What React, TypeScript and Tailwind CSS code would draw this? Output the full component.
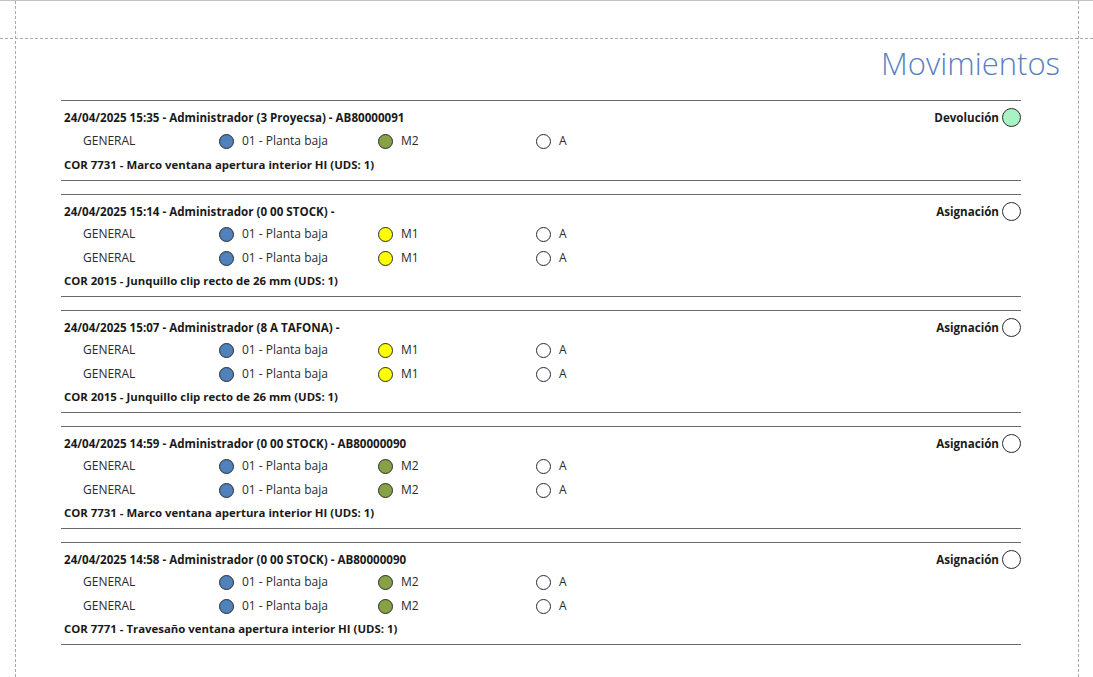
import React from 'react';

type Line = { zona: string; planta: string; modulo: string; moduloColor: string; pos: string };

type Movimiento = {
  cabecera: string;
  tipo: string;
  tipoColor: string;
  lineas: Line[];
  articulo: string;
};

const planta = (modulo: string, color: string): Line => ({
  zona: 'GENERAL',
  planta: '01 - Planta baja',
  modulo,
  moduloColor: color,
  pos: 'A',
});

const M2 = '#86a244';
const M1 = '#ffff00';

const movimientos: Movimiento[] = [
  {
    cabecera: '24/04/2025 15:35 - Administrador (3 Proyecsa) - AB80000091',
    tipo: 'Devolución',
    tipoColor: '#a8f2c4',
    lineas: [planta('M2', M2)],
    articulo: 'COR 7731 - Marco ventana apertura interior HI (UDS: 1)',
  },
  {
    cabecera: '24/04/2025 15:14 - Administrador (0 00 STOCK) -',
    tipo: 'Asignación',
    tipoColor: '#ffffff',
    lineas: [planta('M1', M1), planta('M1', M1)],
    articulo: 'COR 2015 - Junquillo clip recto de 26 mm (UDS: 1)',
  },
  {
    cabecera: '24/04/2025 15:07 - Administrador (8 A TAFONA) -',
    tipo: 'Asignación',
    tipoColor: '#ffffff',
    lineas: [planta('M1', M1), planta('M1', M1)],
    articulo: 'COR 2015 - Junquillo clip recto de 26 mm (UDS: 1)',
  },
  {
    cabecera: '24/04/2025 14:59 - Administrador (0 00 STOCK) - AB80000090',
    tipo: 'Asignación',
    tipoColor: '#ffffff',
    lineas: [planta('M2', M2), planta('M2', M2)],
    articulo: 'COR 7731 - Marco ventana apertura interior HI (UDS: 1)',
  },
  {
    cabecera: '24/04/2025 14:58 - Administrador (0 00 STOCK) - AB80000090',
    tipo: 'Asignación',
    tipoColor: '#ffffff',
    lineas: [planta('M2', M2), planta('M2', M2)],
    articulo: 'COR 7771 - Travesaño ventana apertura interior HI (UDS: 1)',
  },
];

const Dot = ({ color, size = 'sm' }: { color: string; size?: 'sm' | 'lg' }) => (
  <span
    className={
      size === 'lg'
        ? 'inline-block w-[19px] h-[19px] rounded-full border border-[#2b2b2b] shrink-0'
        : 'inline-block w-[15px] h-[15px] rounded-full border border-[#2b2b2b] shrink-0'
    }
    style={{ backgroundColor: color }}
  />
);

const Registro = ({ m }: { m: Movimiento }) => (
  <div className="border-y border-[#6a6a6a] pt-[6px] pb-[4px] mb-[13px] text-[12px] text-[#1a1a1a]">
    {/* Cabecera */}
    <div className="flex items-center justify-between h-[21px]">
      <span className="pl-[3px] font-bold text-[11.6px]">{m.cabecera}</span>
      <span className="flex items-center gap-[3px] font-bold text-[11.6px]">
        {m.tipo}
        <Dot color={m.tipoColor} size="lg" />
      </span>
    </div>

    {/* Lineas */}
    <div className="min-h-[26px] flex flex-col justify-center">
      {m.lineas.map((l, i) => (
        <div key={i} className="flex items-center h-[24px] pl-[22px] text-[#2a2a2a]">
          <span className="w-[136px]">{l.zona}</span>
          <span className="w-[159px] flex items-center gap-[8px]">
            <Dot color="#4f81bd" />
            {l.planta}
          </span>
          <span className="w-[158px] flex items-center gap-[8px]">
            <Dot color={l.moduloColor} />
            {l.modulo}
          </span>
          <span className="flex items-center gap-[8px]">
            <Dot color="#ffffff" />
            {l.pos}
          </span>
        </div>
      ))}
    </div>

    {/* Articulo */}
    <div className="h-[22px] flex items-center pl-[3px] font-bold text-[11.4px]">{m.articulo}</div>
  </div>
);

export default function App() {
  return (
    <div className="relative w-[1093px] h-[677px] overflow-hidden bg-white border-t border-[#c2c2c2] font-['Open_Sans',sans-serif]">
      {/* guias de pagina */}
      <div className="absolute left-[15px] top-0 bottom-0 border-l border-dashed border-[#a8a8a8]" />
      <div className="absolute left-[1078px] top-0 bottom-0 border-l border-dashed border-[#a8a8a8]" />
      <div className="absolute left-0 right-0 top-[37px] border-t border-dashed border-[#a8a8a8]" />

      <div className="pl-[61px] pr-[33px] pt-[40px]">
        <h1 className="text-right text-[31px] leading-[44px] font-light text-[#5a7fbf]">
          Movimientos
        </h1>
        <div className="mt-[15px] mr-[39px]">
          {movimientos.map((m, i) => (
            <Registro key={i} m={m} />
          ))}
        </div>
      </div>
    </div>
  );
}
